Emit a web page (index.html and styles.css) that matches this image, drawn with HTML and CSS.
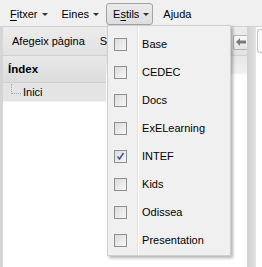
FILE: index.html
```html
<!DOCTYPE html>
<html lang="ca">
<head>
    <meta charset="UTF-8">
    <meta name="viewport" content="width=device-width, initial-scale=1.0">
    <title>eXe - Estils</title>
    <link rel="stylesheet" href="styles.css">
</head>
<body>
    <div class="menubar">
        <div class="menu-item"><span><u>F</u>itxer</span><i class="caret"></i></div>
        <div class="menu-item"><span>Eines</span><i class="caret"></i></div>
        <div class="menu-item open">
            <span>E<u>s</u>tils</span><i class="caret"></i>
            <ul class="dropdown">
                <li><span class="check"></span><span class="label">Base</span></li>
                <li><span class="check"></span><span class="label">CEDEC</span></li>
                <li><span class="check"></span><span class="label">Docs</span></li>
                <li><span class="check"></span><span class="label">ExELearning</span></li>
                <li><span class="check checked"><svg width="9" height="9" viewBox="0 0 9 9"><path d="M1.5 4.5 L3.5 7 L7.5 1" fill="none" stroke="#3b4f9c" stroke-width="1.4"/></svg></span><span class="label">INTEF</span></li>
                <li><span class="check"></span><span class="label">Kids</span></li>
                <li><span class="check"></span><span class="label">Odissea</span></li>
                <li><span class="check"></span><span class="label">Presentation</span></li>
            </ul>
        </div>
        <div class="menu-item"><span>Ajuda</span></div>
    </div>

    <div class="main">
        <div class="workspace">
            <div class="toolbar">
                <span class="tool">Afegeix pàgina</span>
                <span class="tool">S</span>
                <span class="spacer"></span>
                <span class="tool-btn">
                    <svg width="10" height="8" viewBox="0 0 10 8"><path d="M0 4 L4 0 L4 2.5 L10 2.5 L10 5.5 L4 5.5 L4 8 Z" fill="#7a7a7a"/></svg>
                </span>
            </div>
            <div class="panes">
                <div class="outline">
                    <div class="outline-head">Índex</div>
                    <div class="outline-row"><span class="tree-line"></span>Inici</div>
                    <div class="outline-body"></div>
                </div>
                <div class="content">
                    <div class="content-head"></div>
                </div>
            </div>
        </div>
        <div class="splitter"></div>
        <div class="rightpane"><div class="rightbox"></div></div>
    </div>
</body>
</html>
```

FILE: styles.css
```css
html, body {
    margin: 0;
    padding: 0;
}
body {
    width: 262px;
    height: 267px;
    overflow: hidden;
    font-family: Tahoma, "Liberation Sans", Arial, sans-serif;
    font-size: 11px;
    color: #000;
    background-color: #fff;
    display: flex;
    flex-direction: column;
}
u {
    text-decoration: underline;
    text-underline-offset: 2px;
}

/* menu bar */
.menubar {
    height: 27px;
    flex: none;
    display: flex;
    gap: 3px;
    padding: 3px 0 0 3px;
    box-sizing: border-box;
    background-color: #f0f0f0;
    border-bottom: 1px solid #d2d2d2;
}
.menu-item {
    position: relative;
    height: 22px;
    display: flex;
    align-items: center;
    gap: 4px;
    padding: 0 3px 0 6px;
    border: 1px solid transparent;
    border-radius: 3px;
    box-sizing: border-box;
}
.menu-item.open {
    border-color: #a3a3a3;
    background: linear-gradient(#eaeaea, #dedede);
}
.caret {
    width: 0;
    height: 0;
    border-left: 3px solid transparent;
    border-right: 3px solid transparent;
    border-top: 3px solid #333;
    margin-top: 1px;
}

/* dropdown */
.dropdown {
    position: absolute;
    top: 21px;
    left: 0;
    z-index: 10;
    width: 122px;
    margin: 0;
    padding: 4px 0 1px 0;
    list-style: none;
    background:
        linear-gradient(to right, transparent 29px, #e2e2e2 29px, #e2e2e2 30px, #fff 30px, #fff 31px, transparent 31px),
        #f0f0f0;
    border: 1px solid #cfcfcf;
    box-shadow: 2px 2px 3px rgba(0, 0, 0, 0.3);
}
.dropdown li {
    height: 28px;
    display: flex;
    align-items: center;
}
.check {
    width: 13px;
    height: 13px;
    margin-left: 6px;
    box-sizing: border-box;
    border: 1px solid #8e8f8f;
    background: linear-gradient(135deg, #dcdcdc, #f6f6f6);
    display: flex;
    align-items: center;
    justify-content: center;
}
.label {
    margin-left: 15px;
}

/* main area */
.main {
    flex: 1;
    display: flex;
    min-height: 0;
}
.workspace {
    flex: 1;
    display: flex;
    flex-direction: column;
    min-width: 0;
}
.toolbar {
    height: 29px;
    flex: none;
    display: flex;
    align-items: center;
    padding-left: 9px;
    gap: 15px;
    background: linear-gradient(#ececec, #e2e2e2);
    border-bottom: 1px solid #d0d0d0;
    border-left: 3px solid #d6d6d6;
    box-sizing: border-box;
    white-space: nowrap;
    overflow: hidden;
}
.spacer {
    flex: 1;
}
.tool-btn {
    width: 14px;
    height: 15px;
    flex: none;
    display: flex;
    align-items: center;
    justify-content: center;
    box-sizing: border-box;
    border: 1px solid #b5b5b5;
    border-right: none;
    border-radius: 2px 0 0 2px;
    background: linear-gradient(#fafafa, #e4e4e4);
    margin-top: 2px;
}
.panes {
    flex: 1;
    display: flex;
}
.outline {
    width: 106px;
    flex: none;
    display: flex;
    flex-direction: column;
    border-left: 3px solid #d4d4d4;
    box-sizing: border-box;
}
.outline-head {
    height: 26px;
    display: flex;
    align-items: center;
    padding-left: 5px;
    font-weight: bold;
    font-size: 11.5px;
    background: linear-gradient(#e8e8e8, #dcdcdc);
    border-bottom: 1px solid #cfcfcf;
}
.outline-row {
    height: 18px;
    display: flex;
    align-items: center;
    padding-left: 20px;
    position: relative;
    background-color: #e4e4e4;
}
.tree-line {
    position: absolute;
    left: 8px;
    top: 1px;
    width: 9px;
    height: 9px;
    border-left: 1px dotted #a8a8a8;
    border-bottom: 1px dotted #a8a8a8;
}
.outline-body {
    flex: 1;
    background-color: #fff;
    border-top: 1px solid #f0f0f0;
}
.content {
    flex: 1;
    background-color: #fff;
}
.content-head {
    height: 18px;
    background: linear-gradient(#e6e6e6, #f2f2f2);
}
.splitter {
    width: 9px;
    flex: none;
    background: linear-gradient(to right, #d0d0d0, #dadada 60%, #e4e4e4);
}
.rightpane {
    width: 6px;
    flex: none;
    background-color: #fff;
    padding-top: 2px;
}
.rightbox {
    height: 22px;
    margin-left: 1px;
    border: 1px solid #c4c4c4;
    border-right: none;
    border-radius: 3px 0 0 3px;
    background-color: #fafafa;
}
```
